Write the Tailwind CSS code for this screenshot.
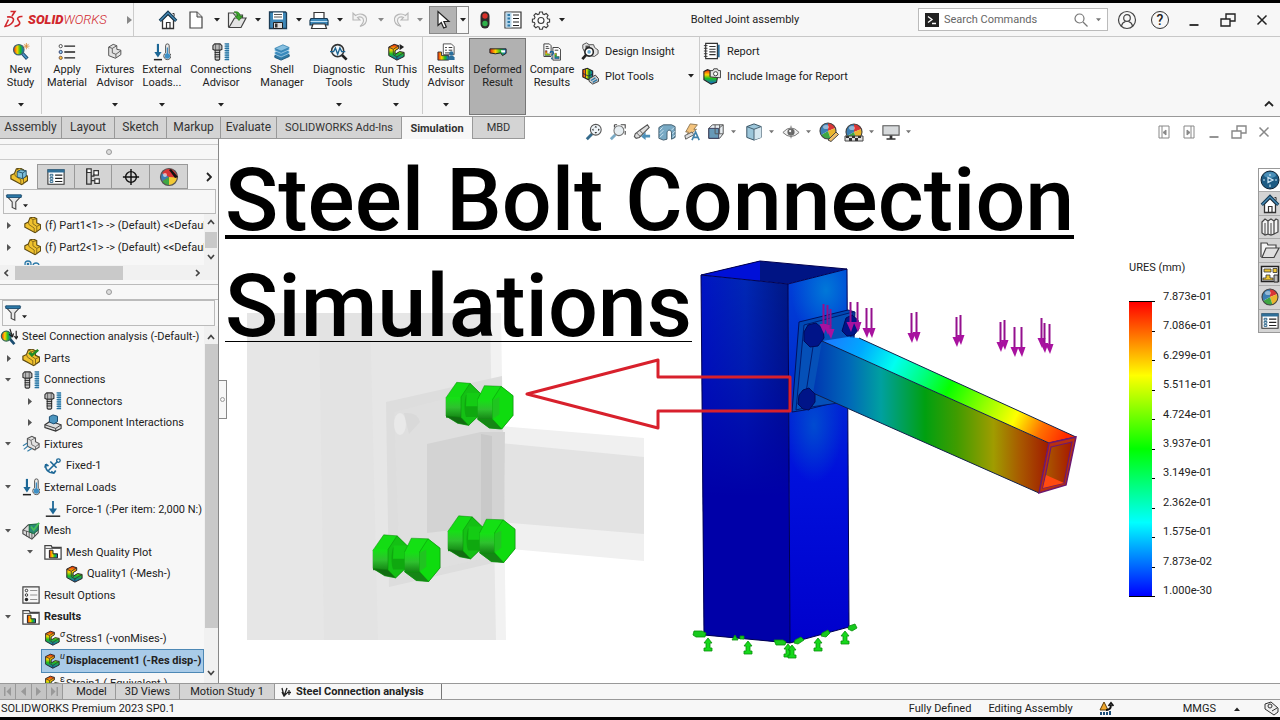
<!DOCTYPE html>
<html lang="en">
<head>
<meta charset="utf-8">
<meta name="viewport" content="width=device-width, initial-scale=1">
<title>Bolted Joint assembly - SOLIDWORKS</title>
<script src="https://cdn.jsdelivr.net/npm/@tailwindcss/browser@4"></script>
</head>
<body class="bg-black">
<!-- Icon library -->
<svg class="absolute h-0 w-0" aria-hidden="true">
  <defs>
    <linearGradient id="rainbow" x1="0" y1="0" x2="0" y2="1"><stop offset="0" stop-color="#e8200c"/><stop offset=".35" stop-color="#ffd400"/><stop offset=".6" stop-color="#20c020"/><stop offset="1" stop-color="#1060e0"/></linearGradient>
    <linearGradient id="rainbowH" x1="0" y1="0" x2="1" y2="0"><stop offset="0" stop-color="#e8200c"/><stop offset=".35" stop-color="#ffd400"/><stop offset=".65" stop-color="#20c020"/><stop offset="1" stop-color="#1060e0"/></linearGradient>
    <linearGradient id="gL" gradientUnits="userSpaceOnUse" x1="701" y1="0" x2="790" y2="0"><stop offset="0" stop-color="#0014c4"/><stop offset=".5" stop-color="#0028b4"/><stop offset="1" stop-color="#001880"/></linearGradient>
  </defs>
  <symbol id="dd" viewBox="0 0 6 4"><path d="M0 0h6L3 3.5z" fill="currentColor"/></symbol>
  <symbol id="home" viewBox="0 0 20 20"><path d="M4.500 10v8.500h11V10L10 4.500z" fill="#fff" stroke="#333" stroke-width="1.300"/><path d="M8.500 18.500v-6h3.500v6" fill="none" stroke="#333" stroke-width="1.200"/><path d="M1.800 10.800 10 2.600l8.200 8.200" fill="none" stroke="#123a55" stroke-width="3.200"/><path d="M2.300 10.500 10 2.900l7.700 7.600" fill="none" stroke="#4a8db8" stroke-width="1.200"/><path d="M14.500 3.500h1.600v3" stroke="#333" fill="none"/></symbol>
  <symbol id="doc" viewBox="0 0 20 20"><path d="M4 2h7l5 5v11H4z" fill="#fff" stroke="#444" stroke-width="1.200"/><path d="M11 2v5h5" fill="#ddd" stroke="#444"/></symbol>
  <symbol id="open" viewBox="0 0 20 20"><path d="M1.500 17V3h5l1 2h8v3" fill="#f1f1f1" stroke="#444" stroke-width="1.200"/><path d="M2 17.500 7.500 8H19l-5 9.500z" fill="#e4e4e4" stroke="#444" stroke-width="1.200"/><path d="M7 2c4-1 6 1 6 4h2.500L12 10.500 8 6h2.500C10.500 4 9 3 7 2z" fill="#3ba52a" stroke="#1c6e13" stroke-width=".7"/></symbol>
  <symbol id="save" viewBox="0 0 20 20"><path d="M1.500 2h16l1 1v15.500h-17z" fill="#3e88b8" stroke="#1c3c55" stroke-width="1.300"/><path d="M5 2.500h10v7H5z" fill="#fff"/><path d="M6 4.500h8M6 7h8" stroke="#555"/><path d="M5.500 12.500h9v6h-9z" fill="#ddd" stroke="#222"/><path d="M7 13.500h2.500v4H7z" fill="#333"/></symbol>
  <symbol id="print" viewBox="0 0 20 20"><path d="M5 9V2.500h10V9" fill="#fff" stroke="#333" stroke-width="1.200"/><path d="M2 8.500h16l1 2v4.500H1v-4.500z" fill="#3e88b8" stroke="#173a54" stroke-width="1.200"/><path d="M1.500 11.500h17" stroke="#bfe0f4"/><path d="m4 14-1.500 4.500h15L16 14z" fill="#fff" stroke="#333" stroke-width="1.200"/></symbol>
  <symbol id="undo" viewBox="0 0 20 20"><path d="M3 3v7h7L7.500 7.500c3-1.500 6 0 6 3 0 2-1.500 4-3.500 6 5-1.500 7-4.500 6.500-8C15.800 4.500 10 2.500 5.500 5.500z" fill="#f2f2f2" stroke="#b7b7b7" stroke-width="1.100"/></symbol>
  <symbol id="cursor" viewBox="0 0 20 20"><path d="M5 1.500v14l3.300-3 2.400 5.500 2.600-1.100-2.400-5.400H16z" fill="#fff" stroke="#222" stroke-width="1.200"/></symbol>
  <symbol id="traffic" viewBox="0 0 20 20"><rect x="5.500" y="1.500" width="9" height="17" rx="4.500" fill="#2c2c2c"/><circle cx="10" cy="6" r="2.700" fill="#d8322a"/><circle cx="10" cy="13.500" r="2.700" fill="#2fb04a"/></symbol>
  <symbol id="list" viewBox="0 0 20 20"><path d="M2 2h16v16H2z" fill="#fff" stroke="#333" stroke-width="1.200"/><path d="M2.500 2.500h6v15h-6z" fill="#b7d6ea"/><path d="M4.500 4h2.500v2H4.500zM4.500 7.500h2.500v2H4.500zM4.500 11h2.500v2H4.500zM4.500 14.500h2.500v2H4.500z" fill="#2c79a8"/><path d="M10 5h6M10 8.500h6M10 12h6M10 15.500h6" stroke="#222" stroke-width="1.200"/></symbol>
  <symbol id="panel" viewBox="0 0 20 20"><path d="M1 2h18v16H1z" fill="#fff" stroke="#333" stroke-width="1.200"/><path d="M.5 1.500h19v3.500H.5z" fill="#2f6f98"/><path d="M3.500 7h3v2h-3zM3.500 10.500h3v2h-3zM3.500 14h3v2h-3z" fill="none" stroke="#1d5a82"/><path d="M9 8h8M9 11.500h8M9 15h8" stroke="#222" stroke-width="1.300"/></symbol>
  <symbol id="gear" viewBox="0 0 20 20"><path d="m8.600 2 2.800 0 .5 2 1.400.6 1.900-1.100 1.900 1.900-1.100 1.900.6 1.400 2 .5v2.800l-2 .5-.6 1.400 1.100 1.900-1.900 1.900-1.900-1.100-1.400.6-.5 2H8.600l-.5-2-1.400-.6-1.900 1.100-1.900-1.900L4 13.900l-.6-1.400-2-.5V9.200l2-.5L4 7.300 2.900 5.400l1.900-1.900 1.900 1.100L8.100 4z" fill="#fafafa" stroke="#3c3c3c" stroke-width="1.100"/><circle cx="10" cy="10.500" r="3" fill="#fff" stroke="#3c3c3c" stroke-width="1.100"/></symbol>
  <symbol id="newstudy" viewBox="0 0 20 20"><path d="m11 11 6 6.500" stroke="#1a4c70" stroke-width="4"/><path d="m11.500 11.500 5 5.500" stroke="#4e97c8" stroke-width="1.800"/><circle cx="7.500" cy="7.500" r="5.800" fill="url(#rainbowH)" stroke="#3e6474" stroke-width="1.400"/><path d="M16 0v7M12.500 3.500h7M13.500 1l5 5M18.500 1l-5 5" stroke="#d98b37" stroke-width=".9"/></symbol>
  <symbol id="apply" viewBox="0 0 20 20"><path d="M7 3.500h12M7 10h12M7 16.500h12" stroke="#222" stroke-width="1.600"/><circle cx="3" cy="3.500" r="1.800" fill="#fff" stroke="#444"/><circle cx="3" cy="10" r="1.800" fill="#9bd1f0" stroke="#236"/><circle cx="3" cy="16.500" r="1.800" fill="#ffc43a" stroke="#754"/></symbol>
  <symbol id="fixture" viewBox="0 0 20 20"><path d="m3 4.500 5-3 4 1.500v4l4.500 1v5l-6 4-7.500-3z" fill="#e3e3e3" stroke="#555" stroke-width="1.100"/><path d="m3 4.500 4 1.500v5l4 1.500v4M7 6l5-3M11 12.500l5.500-4" fill="none" stroke="#555"/></symbol>
  <symbol id="loads" viewBox="0 0 20 20"><path d="M5.500 1v12" stroke="#1c6796" stroke-width="2.400"/><path d="M1.500 10h8l-4 6z" fill="#1c6796"/><path d="M1 18.500h9" stroke="#222" stroke-width="1.700"/><path d="M14 3a2 2 0 0 1 4 0v8a4 4 0 1 1-4 0z" fill="#eee" stroke="#444"/><circle cx="16" cy="14.500" r="3" fill="#3e8fc4"/><path d="M16 5v8" stroke="#3e8fc4" stroke-width="1.500"/></symbol>
  <symbol id="bolt" viewBox="0 0 20 20"><path d="m1 3 2-2h6l2 2v4l-2 1H3L1 7z" fill="#bbb" stroke="#333" stroke-width="1.200"/><path d="M4 1v7M8 1v7" stroke="#444" stroke-width=".8"/><path d="M3.500 8h5v10l-1 1h-3l-1-1z" fill="#ccc" stroke="#333" stroke-width="1.200"/><path d="M3 10.500h6M3 13h6M3 15.500h6" stroke="#222"/><path d="M15 1h4v18h-4z" fill="#8dc1de"/><path d="M19 1h-5M19 3.500h-5M19 6h-5M19 8.500h-5M19 11h-5M19 13.500h-5M19 16h-5M19 18.500h-5" stroke="#2b74a0" stroke-width="1.200"/></symbol>
  <symbol id="shell" viewBox="0 0 20 20"><path d="m2 14 9-4 7 3v2l-9 4-7-3z" fill="#2e79a5" stroke="#1b557a"/><path d="m2 10 9-4 7 3v2.500l-9 4-7-3z" fill="#3a8abd" stroke="#c8e4f4" stroke-width=".7"/><path d="m2 6 9-4 7 3v2.500l-9 4-7-3z" fill="#3a8abd" stroke="#c8e4f4" stroke-width=".7"/><path d="m2 6 9-4 7 3-9 4z" fill="#86bfe0" stroke="#2e79a5" stroke-width=".7"/></symbol>
  <symbol id="diag" viewBox="0 0 20 20"><path d="m13 13 5.500 5.500" stroke="#222" stroke-width="3"/><circle cx="8.500" cy="8.500" r="6.700" fill="#f2f8fc" stroke="#333" stroke-width="1.700"/><path d="M0 9.500h4l2-4 2.500 7L11 5.500l2 4h4" fill="none" stroke="#1d6491" stroke-width="1.500"/></symbol>
  <symbol id="part" viewBox="0 0 20 20"><path d="m2 4.500 6-3 5 1.500v3l-4 2.500v4l5-3 5 1v4.500L11 19l-9-5z" fill="url(#rainbow)" stroke="#222" stroke-width="1.100"/><path d="m2 4.500 5 2.500v6l4 2.500V19M7 7l6-4M11 15.500l8-5" fill="none" stroke="#333" stroke-width=".9"/></symbol>
  <symbol id="run" viewBox="0 0 20 20"><use href="#part"/><path d="m14 1 5 3.500L14 8z" fill="#222"/></symbol>
  <symbol id="results" viewBox="0 0 20 20"><path d="M7 1h9l3 3v9H7z" fill="#fff" stroke="#444"/><path d="M9 5h2M9 8h2M13 5h4M13 8h4M9 11h8" stroke="#222"/><path d="M1 10h4v4h8v5H1z" fill="url(#rainbowH)" stroke="#333"/><circle cx="16" cy="11.500" r="2.300" fill="#2b6f9c"/><path d="M12.500 19v-3l2-2h3l2 2v3z" fill="#2b6f9c"/></symbol>
  <symbol id="deform" viewBox="0 0 20 20"><path d="M1 6.500h18v5l-4 2.500-2-3-6 1-6-1z" fill="url(#rainbowH)" stroke="#222" stroke-width="1.100"/><path d="M13 8h5v2.500h-4z" fill="#fff"/></symbol>
  <symbol id="compare" viewBox="0 0 20 20"><path d="M1 1h6l2 2v12H1z" fill="#fff" stroke="#333"/><path d="M11 5h6l2.500 2v12H11z" fill="#fff" stroke="#333"/><path d="M3 4h3M3 6h4M13 8h4" stroke="#333"/><path d="M2.500 8.500h2V12h3v2h-5zM13 11.500h2V15h3v2.500h-5z" fill="url(#rainbow)" stroke="#333" stroke-width=".5"/><path d="M8 11c0-2 3.500-2 3.500 0 0 1.500-1.700 1.500-1.700 3M9.800 16v2" fill="none" stroke="#1a639a" stroke-width="1.600"/></symbol>
  <symbol id="insight" viewBox="0 0 20 20"><path d="m2 3 4-2 3 2h5l1 3 4 3v4l-4 3-7-1-4-4-2-4z" fill="#e4e4e4" stroke="#444"/><path d="M5 4h5v3H5z" fill="#555"/><circle cx="9" cy="11" r="4.700" fill="#fff" stroke="#222" stroke-width="1.700"/><path d="M5.500 14.500 1.500 19" stroke="#222" stroke-width="3"/><circle cx="9" cy="11" r="2" fill="#68a7cc"/></symbol>
  <symbol id="plot" viewBox="0 0 20 20"><path d="m2 3 5-1.500 6 3v8L8 14 2 11z" fill="url(#rainbowH)" stroke="#222" stroke-width="1.200"/><path d="M5 2v10M9 4v9M2 7l6 3 5-2" stroke="#224" stroke-width=".9" fill="none"/><path d="m9 13 7-4 3.500 4v3L13 19l-4-3z" fill="#ccc" stroke="#333"/><path d="m11 15 5-3M13 17l5-3" stroke="#2c79a8" stroke-width="1.500"/></symbol>
  <symbol id="report" viewBox="0 0 20 20"><path d="M3 1.500h13v17H3z" fill="#fff" stroke="#333" stroke-width="1.300"/><path d="M1 4h4M1 7h4M1 10h4M1 13h4M1 16h4" stroke="#333"/><path d="M7 5h7M7 8h7M7 11h7M7 14h7" stroke="#333" stroke-width="1.200"/><path d="M17.500 3v14" stroke="#2b6f9c" stroke-width="2"/></symbol>
  <symbol id="include" viewBox="0 0 20 20"><path d="m1 5 4-2 3 1v6l8 2-1 5-6 2-8-5z" fill="url(#rainbow)" stroke="#222" stroke-width="1.200"/><path d="M8 4h3l1-2h4l1 2h2.500v8L8 11z" fill="#e4e4e4" stroke="#333"/><circle cx="14" cy="7.500" r="2.300" fill="#fff" stroke="#333"/></symbol>
  <symbol id="zoomfit" viewBox="0 0 20 20"><path d="M8 12 2 18" stroke="#356b8c" stroke-width="3.200"/><circle cx="12" cy="7.500" r="6" fill="#eef4f8" stroke="#555" stroke-width="1.200"/><path d="m12 3 1.500 2h-3zM12 12l1.500-2h-3zM7.500 7.500l2-1.500v3zM16.500 7.500l-2-1.500v3z" fill="#333"/></symbol>
  <symbol id="zoomarea" viewBox="0 0 20 20"><path d="M6 2h3M13 2h5v4M18 9v4M6 2v3" stroke="#444" stroke-width="1.200" fill="none"/><path d="m7 13-5 5" stroke="#7aaac5" stroke-width="3.200"/><circle cx="11" cy="8.500" r="5.500" fill="#e6edf1" stroke="#777" stroke-width="1.200"/></symbol>
  <symbol id="prevview" viewBox="0 0 20 20"><path d="m16 2 2 3-7 7-4 4-3.500 1L1.500 15l1-3 5-4z" fill="#ddd" stroke="#555" stroke-width="1.200"/><path d="m7.500 8 3.500 4M4 11l4 4" stroke="#555"/><path d="M19 13h-5v-3l-5 5 5 4v-3h5z" fill="#4b8fb9"/></symbol>
  <symbol id="section" viewBox="0 0 20 20"><path d="m1 5 5-3h9l4 2v12l-4 2v-7c0-4-5-4-5 0v7l-4 1-5-2z" fill="#78a9c4" stroke="#3b5666"/><path d="m2 8 3-3M2 12l4-4M2 16l4-4M15 8l3-3M16 12l3-3M16 16l3-3" stroke="#d7ebf5"/></symbol>
  <symbol id="dynamic" viewBox="0 0 20 20"><path d="m8 1 8 1-4 5h3L3 17l3-7H3z" fill="#f4c37c" stroke="#8c734c"/><path d="m2 14 8-4 2 3-9 5z" fill="#ddd" stroke="#555"/><path d="m10 19 4-9 4 9M12 16h4.500" fill="none" stroke="#3f81aa" stroke-width="1.800"/></symbol>
  <symbol id="orient" viewBox="0 0 20 20"><path d="m2 6 4-4h12v10l-4 5H2z" fill="#e8eef2" stroke="#444"/><path d="M2 6h11v11H2z" fill="#6799b7" stroke="#335"/><path d="m13 6 5-4M9 2v10h9M14 2v10" stroke="#555" fill="none"/></symbol>
  <symbol id="cube" viewBox="0 0 20 20"><path d="m2 4 8-3 8 3v12l-8 3-8-3z" fill="#9cc6da" stroke="#3b5666" stroke-width="1.100"/><path d="m10 7 8-3v12l-8 3z" fill="#d4e6ef"/><path d="m2 4 8 3 8-3M10 7v12" fill="none" stroke="#3b5666"/></symbol>
  <symbol id="eye" viewBox="0 0 20 20"><path d="M1 10.500q9-10 18 0-9 9-18 0z" fill="#eee" stroke="#777" stroke-width="1.100"/><circle cx="10" cy="10" r="4" fill="#666"/><path d="M10 3v14" stroke="#777"/><circle cx="9" cy="9" r="1.200" fill="#fff"/></symbol>
  <symbol id="ball" viewBox="0 0 20 20"><circle cx="10" cy="10" r="8" fill="#fff"/><path d="M10 10V2a8 8 0 0 1 7.500 5z" fill="#d93636"/><path d="m10 10 7.500-3a8 8 0 0 1-5 10.700z" fill="#e9b52e"/><path d="m10 10 2.500 7.700A8 8 0 0 1 3 14z" fill="#3fa743"/><path d="m10 10-7 4a8 8 0 0 1 7-12z" fill="#3c7fb4"/><circle cx="10" cy="10" r="8" fill="none" stroke="#444" stroke-width="1.100"/><ellipse cx="8" cy="6" rx="3" ry="2" fill="#fff" opacity=".45"/></symbol>
  <symbol id="ballred" viewBox="0 0 20 20"><circle cx="10" cy="10" r="8.500" fill="#d93636"/><path d="M10 10 3 14.500a8.500 8.500 0 0 1-.5-8.500z" fill="#3c7fb4"/><path d="m10 10-7 4.500a8.500 8.500 0 0 0 7 4z" fill="#3fa743"/><path d="M10 10v8.500a8.500 8.500 0 0 0 8.500-8z" fill="#f2c935"/><circle cx="10" cy="10" r="8.500" fill="none" stroke="#555" stroke-width="1.200"/><path d="m10 3 2-1 7 8-3 1z" fill="#111"/><circle cx="6" cy="8" r="2" fill="#fff" opacity=".6"/></symbol>
  <symbol id="appear" viewBox="0 0 20 20"><use href="#ball" x="-1" y="-1"/><path d="m9 18 8-8 2.500 2.500-7.500 7z" fill="#f0c06a" stroke="#444"/></symbol>
  <symbol id="scene" viewBox="0 0 20 20"><use href="#ball"/><path d="M1 14h18v5H1z" fill="#ddd" stroke="#444"/><path d="M2 14h3v2H2zM8 14h3v2H8zM14 14h3v2h-3zM5 16h3v3H5zM11 16h3v3h-3z" fill="#333"/></symbol>
  <symbol id="monitor" viewBox="0 0 20 20"><path d="M1 3h18v10.500H1z" fill="#d7dadc" stroke="#555" stroke-width="1.200"/><path d="M8.500 14h3v3h-3zM5 17h10v1.500H5z" fill="#333"/></symbol>
  <symbol id="restore" viewBox="0 0 20 20"><path d="M3 9h9v7H3z" fill="none" stroke="currentColor" stroke-width="1.400"/><path d="M8 9V4h9v7h-5" fill="none" stroke="currentColor" stroke-width="1.400"/></symbol>
  <symbol id="close" viewBox="0 0 20 20"><path d="m5.500 5.500 9 9m0-9-9 9" stroke="currentColor" stroke-width="1.500"/></symbol>
  <symbol id="min" viewBox="0 0 20 20"><path d="M5.500 15h9" stroke="currentColor" stroke-width="1.800"/></symbol>
  <symbol id="yellow" viewBox="0 0 20 20"><path d="m1 8 4-2 2-5 4-1 4 2v5l4.500 2v5L13 18.500 1 12z" fill="#f0c22e" stroke="#5b4710" stroke-width="1.300"/><path d="m7 1 3.500 2v5L15 11v7M10.500 3 15 2M15 11l4.500-2M5 6l1 3 6 4v5" fill="none" stroke="#7d6218"/></symbol>
  <symbol id="asm" viewBox="0 0 20 20"><use href="#yellow"/><path d="m8 4 4-2 6 1v6l-4 3-6-2z" fill="#7ec0dc" stroke="#234e66"/><path d="m8 4 6 1.500V12M14 5.500 18 3" stroke="#234e66" fill="none"/></symbol>
  <symbol id="tree" viewBox="0 0 20 20"><path d="M3 1h5v4H3zM11 3h5v5h-5zM12 12h5v5h-5z" fill="#fff" stroke="#333" stroke-width="1.300"/><path d="M3 1v17h5V5M8 9h3V7M8 14h4" stroke="#333" fill="none" stroke-width="1.400"/></symbol>
  <symbol id="target" viewBox="0 0 20 20"><circle cx="10" cy="10" r="6" fill="none" stroke="#111" stroke-width="1.600"/><path d="M10 1v18M1 10h18" stroke="#111" stroke-width="1.600"/></symbol>
  <symbol id="funnel" viewBox="0 0 20 20"><path d="M2 3.500h16L12 10v8l-4-2v-6z" fill="#e8e8e8" stroke="#444" stroke-width="1.200"/><path d="M2 2h16v3H2z" fill="#2c79a8" stroke="#1a4c70"/></symbol>
  <symbol id="study" viewBox="0 0 20 20"><path d="m10 11 6 7" stroke="#1a4c70" stroke-width="3"/><circle cx="7" cy="9" r="5.500" fill="url(#rainbowH)" stroke="#365" stroke-width="1.300"/><path d="m11 1 3 9M14 10l-4-3M14 10l1-4M18 3v8M16 9l2 3 2-3" stroke="#222" stroke-width="1.300" fill="none"/></symbol>
  <symbol id="partcheck" viewBox="0 0 20 20"><use href="#yellow"/><path d="m8 4 3 3 7-6" fill="none" stroke="#218c26" stroke-width="2.800"/></symbol>
  <symbol id="interact" viewBox="0 0 20 20"><path d="m1 12 6-4 12 4v4l-6 3L1 15z" fill="#ddd" stroke="#333" stroke-width="1.200"/><path d="m1 12 12 4 6-4M13 16v3" fill="none" stroke="#333"/><path d="m6 3 4-2 5 1.500v6L11 11l-5-2z" fill="#4b95bf" stroke="#1a4c70" stroke-width="1.100"/></symbol>
  <symbol id="fixtures" viewBox="0 0 20 20"><path d="m6 4 5-2.500 4 2v4l4 2v4l-5 3-8-4z" fill="#e2e2e2" stroke="#555" stroke-width="1.200"/><path d="m10 6 1 5 4 2v4M6 4l4 2 5-3M15 13l4-3" stroke="#666" fill="none"/><path d="m1 12 5-3M2 16l5-4M6 18l5-3" stroke="#367fa9" stroke-width="1.300"/></symbol>
  <symbol id="anchor" viewBox="0 0 20 20"><path d="M15 5 5 15M7 5l7 7M2 8c-1 6 3 10 9 10M2 8l-1 4M2 8l3 2M11 18l-3-2M11 18l2-3" fill="none" stroke="#1c6796" stroke-width="1.800"/><circle cx="16" cy="4" r="2" fill="none" stroke="#1c6796" stroke-width="1.500"/></symbol>
  <symbol id="force" viewBox="0 0 20 20"><path d="M10 1v11" stroke="#1c6796" stroke-width="2"/><path d="M5.500 9.500h9L10 16z" fill="#1c6796"/><path d="M2 18h16" stroke="#222" stroke-width="1.600"/></symbol>
  <symbol id="mesh" viewBox="0 0 20 20"><path d="m1 9 6-6 11 1v8l-7 7-10-6z" fill="#dadada" stroke="#444" stroke-width="1.200"/><path d="M1 9l10 3 7-8M11 12v7M5 10v6M8 11v7M14 9v7" stroke="#555" fill="none"/><path d="m8 3 10-1v7l-5 4-5-2z" fill="#2b8676" stroke="#163"/><path d="m10 5 3 4 6-8" fill="none" stroke="#45c057" stroke-width="2"/></symbol>
  <symbol id="folder" viewBox="0 0 20 20"><path d="M1 18V3h7l1 2h10v13z" fill="#fff" stroke="#444" stroke-width="1.400"/><path d="M1.500 6h17" stroke="#444"/><path d="M6 8h4v4h5v4.500H6z" fill="url(#rainbowH)" stroke="#222" stroke-width="1.100"/></symbol>
  <symbol id="options" viewBox="0 0 20 20"><path d="M1 1h18v18H1z" fill="#f6f6f6" stroke="#444" stroke-width="1.300"/><path d="M9 5h8M9 10h8M9 15h8" stroke="#888"/><circle cx="5" cy="5" r="1.400" fill="#fff" stroke="#222"/><circle cx="5" cy="10" r="1.400" fill="#fff" stroke="#222"/><circle cx="5" cy="15" r="1.900" fill="#222"/></symbol>
  <symbol id="books" viewBox="0 0 20 20"><path d="m2 5 3-3 3 2v13l-3 1-3-2zM8 4l3-2 3 2v13l-3 1-3-1zM14 4l2-2 2 1v12l-4 2" fill="#f3f3f3" stroke="#444" stroke-width="1.200"/><path d="M5 6v12M11 6v12" stroke="#444"/></symbol>
  <symbol id="folder2" viewBox="0 0 20 20"><path d="M1 17V3h6l1 2h8v3" fill="#f4f4f4" stroke="#444" stroke-width="1.200"/><path d="M2 17.500 6 8h13l-5 9.500z" fill="#e0e0e0" stroke="#444" stroke-width="1.200"/></symbol>
  <symbol id="palette" viewBox="0 0 20 20"><path d="M1.500 2.500h17v15h-17z" fill="#fff" stroke="#222" stroke-width="1.500"/><path d="M4 5h7v3H4zM13 4.500h4v4h-4zM6 11h4v3h3v2H3v-2h3z" fill="#eec531" stroke="#333" stroke-width=".8"/><path d="M14 11h4v7h-4z" fill="#bbb" stroke="#333"/></symbol>
  <symbol id="globe" viewBox="0 0 20 20"><circle cx="10" cy="10" r="9" fill="#1e5c84" stroke="#123"/><ellipse cx="10" cy="5" rx="6" ry="3" fill="#4a8fb8"/><path d="m8 7.500 5 2.500-5 2.500zM3 10h2M15 10h2M10 14.500v2.500M10 4v2" stroke="#cfe6f4" fill="none" stroke-width="1.200"/></symbol>
</svg>

<div class="flex h-screen w-full flex-col overflow-hidden border-y-3 border-black bg-white font-['Roboto','Noto_Sans',sans-serif] text-[11px] leading-[13px] text-[#222]">

  <!-- Title bar -->
  <header class="flex h-[34px] shrink-0 items-center border-b border-[#c8c8c8] bg-[#f7f7f7]">
    <div class="flex h-full w-[134px] shrink-0 items-center border-r border-[#ccc] pl-1">
      <svg class="h-5 w-5" viewBox="0 0 20 20" fill="none" stroke="#d1272c" stroke-width="1.600"><path d="M6.500 1.500h4.500L8 6M3 7c7-1 8 3 4.500 6.500C5.500 15.500 3 16.500 1 16.500L4.500 9.500M18.500 6.500c-4-.5-6 2-4 4s2 5-4 6"/></svg>
      <div class="ml-1 text-[13px] leading-5 font-black text-[#d1272c] italic">SOLID<span class="font-light">WORKS</span></div>
      <svg class="ml-5 h-2 w-[5px]" viewBox="0 0 5 8"><path d="M0 0v8l5-4z" fill="#888"/></svg>
    </div>
    <nav class="flex shrink-0 items-center" aria-label="Quick access">
      <button class="mr-2 ml-6 size-5" aria-label="Home"><svg class="size-5"><use href="#home"/></svg></button>
      <button class="size-5" aria-label="New"><svg class="size-5"><use href="#doc"/></svg></button><button class="flex w-[21px] justify-center" aria-label="New options"><svg class="h-1 w-[6px]"><use href="#dd"/></svg></button>
      <button class="size-5" aria-label="Open"><svg class="size-5"><use href="#open"/></svg></button><button class="flex w-[21px] justify-center" aria-label="Open options"><svg class="h-1 w-[6px]"><use href="#dd"/></svg></button>
      <button class="size-5" aria-label="Save"><svg class="size-5"><use href="#save"/></svg></button><button class="flex w-[21px] justify-center" aria-label="Save options"><svg class="h-1 w-[6px]"><use href="#dd"/></svg></button>
      <button class="size-5" aria-label="Print"><svg class="size-5"><use href="#print"/></svg></button><button class="flex w-[21px] justify-center" aria-label="Print options"><svg class="h-1 w-[6px]"><use href="#dd"/></svg></button>
      <button class="size-5" aria-label="Undo"><svg class="size-5"><use href="#undo"/></svg></button><button class="flex w-[21px] justify-center text-[#888]" aria-label="Undo options"><svg class="h-1 w-[6px]"><use href="#dd"/></svg></button>
      <button class="size-5 -scale-x-100" aria-label="Redo"><svg class="size-5"><use href="#undo"/></svg></button><button class="flex w-[18px] justify-center text-[#888]" aria-label="Redo options"><svg class="h-1 w-[6px]"><use href="#dd"/></svg></button>
      <button class="flex h-7 w-7 items-center justify-center border border-[#8a8a8a] bg-[#b3b3b3]" aria-label="Select"><svg class="size-5"><use href="#cursor"/></svg></button><button class="flex h-7 w-3 items-center justify-center border border-l-0 border-[#8a8a8a]" aria-label="Select options"><svg class="h-1 w-[6px]"><use href="#dd"/></svg></button>
      <button class="ml-[6px] size-5" aria-label="Rebuild"><svg class="size-5"><use href="#traffic"/></svg></button>
      <button class="ml-2 size-5" aria-label="File properties"><svg class="size-5"><use href="#list"/></svg></button>
      <button class="ml-2 size-5" aria-label="Options"><svg class="size-5"><use href="#gear"/></svg></button>
      <button class="flex w-[21px] justify-center" aria-label="More options"><svg class="h-1 w-[6px]"><use href="#dd"/></svg></button>
    </nav>
    <div class="flex-1 text-center">Bolted Joint assembly</div>
    <label class="flex h-[23px] w-[190px] shrink-0 items-center border border-[#bbb] bg-white px-[6px]">
      <svg class="size-[14px] shrink-0" viewBox="0 0 14 14"><path d="M0 0h14v14H0z" fill="#222"/><path d="m3 3.500 4 3-4 3M7 10.500h4" stroke="#fff" fill="none" stroke-width="1.300"/></svg>
      <input class="ml-[5px] w-0 min-w-0 flex-1 outline-none placeholder:text-[#666]" type="search" placeholder="Search Commands" aria-label="Search Commands">
      <svg class="size-[14px] shrink-0" viewBox="0 0 14 14" fill="none" stroke="#777" stroke-width="1.200"><circle cx="5.500" cy="5.500" r="4.500"/><path d="m9 9 4.500 4.500"/></svg>
      <svg class="ml-2 h-1 w-[5px] shrink-0 text-[#777]"><use href="#dd"/></svg>
    </label>
    <div class="flex shrink-0 items-center pr-2 text-[#222]">
      <button class="ml-[9px] size-5" aria-label="Account"><svg class="size-5" viewBox="0 0 20 20" fill="none" stroke="#444" stroke-width="1.200"><circle cx="10" cy="10" r="8.500"/><circle cx="10" cy="8" r="3.300"/><path d="M4.500 16c.5-3 2.500-4 4-4.500M15.500 16c-.5-3-2.500-4-4-4.500"/></svg></button>
      <button class="ml-[14px] flex size-[18px] items-center justify-center rounded-full border border-[#333] text-[14px] leading-4 font-medium" aria-label="Help">?</button>
      <button class="ml-[15px] size-5" aria-label="Minimize"><svg class="size-5"><use href="#min"/></svg></button>
      <button class="ml-[14px] size-5" aria-label="Restore"><svg class="size-5"><use href="#restore"/></svg></button>
      <button class="ml-[14px] size-5" aria-label="Close"><svg class="size-5"><use href="#close"/></svg></button>
    </div>
  </header>

  <!-- Ribbon -->
  <section class="flex h-[80px] shrink-0 items-start border-b border-[#999] bg-[#f7f7f7]" aria-label="Simulation commands">
    <button class="flex h-[77px] w-[42px] shrink-0 flex-col items-center border-r border-[#ccc] pt-[6px]"><svg class="mb-[2px] h-[18px] w-[18px]"><use href="#newstudy"/></svg>New<br>Study<svg class="mt-[14px] h-1 w-[6px]"><use href="#dd"/></svg></button>
    <button class="flex h-[77px] w-[50px] shrink-0 flex-col items-center pt-[6px]"><svg class="mb-[2px] h-[18px] w-[18px]"><use href="#apply"/></svg>Apply<br>Material</button>
    <button class="flex h-[77px] w-[46px] shrink-0 flex-col items-center pt-[6px]"><svg class="mb-[2px] h-[18px] w-[18px]"><use href="#fixture"/></svg>Fixtures<br>Advisor<svg class="mt-[14px] h-1 w-[6px]"><use href="#dd"/></svg></button>
    <button class="flex h-[77px] w-[48px] shrink-0 flex-col items-center pt-[6px]"><svg class="mb-[2px] h-[18px] w-[18px]"><use href="#loads"/></svg>External<br>Loads...<svg class="mt-[14px] h-1 w-[6px]"><use href="#dd"/></svg></button>
    <button class="flex h-[77px] w-[70px] shrink-0 flex-col items-center pt-[6px]"><svg class="mb-[2px] h-[18px] w-[18px]"><use href="#bolt"/></svg>Connections<br>Advisor<svg class="mt-[14px] h-1 w-[6px]"><use href="#dd"/></svg></button>
    <button class="flex h-[77px] w-[52px] shrink-0 flex-col items-center pt-[6px]"><svg class="mb-[2px] h-[18px] w-[18px]"><use href="#shell"/></svg>Shell<br>Manager</button>
    <button class="flex h-[77px] w-[62px] shrink-0 flex-col items-center pt-[6px]"><svg class="mb-[2px] h-[18px] w-[18px]"><use href="#diag"/></svg>Diagnostic<br>Tools<svg class="mt-[14px] h-1 w-[6px]"><use href="#dd"/></svg></button>
    <button class="flex h-[77px] w-[53px] shrink-0 flex-col items-center border-r border-[#ccc] pt-[6px]"><svg class="mb-[2px] h-[18px] w-[18px]"><use href="#run"/></svg>Run This<br>Study<svg class="mt-[14px] h-1 w-[6px]"><use href="#dd"/></svg></button>
    <button class="flex h-[77px] w-[46px] shrink-0 flex-col items-center pt-[6px]"><svg class="mb-[2px] h-[18px] w-[18px]"><use href="#results"/></svg>Results<br>Advisor<svg class="mt-[14px] h-1 w-[6px]"><use href="#dd"/></svg></button>
    <button class="mt-px flex h-[77px] w-[57px] shrink-0 flex-col items-center border border-[#777] bg-[#b1b1b1] pt-[4px]" aria-pressed="true"><svg class="mb-[2px] h-[18px] w-[18px]"><use href="#deform"/></svg>Deformed<br>Result</button>
    <button class="flex h-[77px] w-[52px] shrink-0 flex-col items-center pt-[6px]"><svg class="mb-[2px] h-[18px] w-[18px]"><use href="#compare"/></svg>Compare<br>Results</button>
    <div class="flex h-[77px] w-[122px] shrink-0 flex-col gap-[7px] border-r border-[#ccc] pt-[5px] pl-[3px]">
      <button class="flex items-center"><svg class="mr-[6px] h-[18px] w-[18px]"><use href="#insight"/></svg>Design Insight</button>
      <button class="flex items-center pr-[5px]"><svg class="mr-[6px] h-[18px] w-[18px]"><use href="#plot"/></svg>Plot Tools<svg class="ml-auto h-1 w-[6px]"><use href="#dd"/></svg></button>
    </div>
    <div class="flex h-[77px] flex-col gap-[7px] pt-[5px] pl-[3px]">
      <button class="flex items-center"><svg class="mr-[6px] h-[18px] w-[18px]"><use href="#report"/></svg>Report</button>
      <button class="flex items-center"><svg class="mr-[6px] h-[18px] w-[18px]"><use href="#include"/></svg>Include Image for Report</button>
    </div>
    <button class="mt-[62px] mr-[6px] ml-auto" aria-label="Collapse ribbon"><svg class="h-[10px] w-[10px]" viewBox="0 0 10 10"><path d="m1 7 4-4 4 4" fill="none" stroke="#222" stroke-width="1.800"/></svg></button>
  </section>

  <!-- Command tabs and view toolbar -->
  <div class="flex h-[22px] shrink-0">
    <div class="flex shrink-0 text-[12px] text-[#333]" role="tablist">
      <button role="tab" class="w-[62px] border-r border-b border-[#999] bg-[#d4d4d4]">Assembly</button>
      <button role="tab" class="w-[53px] border-r border-b border-[#999] bg-[#d4d4d4]">Layout</button>
      <button role="tab" class="w-[52px] border-r border-b border-[#999] bg-[#d4d4d4]">Sketch</button>
      <button role="tab" class="w-[54px] border-r border-b border-[#999] bg-[#d4d4d4]">Markup</button>
      <button role="tab" class="w-[56px] border-r border-b border-[#999] bg-[#d4d4d4]">Evaluate</button>
      <button role="tab" class="w-[125px] border-r border-b border-[#999] bg-[#d4d4d4] text-[11px]">SOLIDWORKS Add-Ins</button>
      <button role="tab" aria-selected="true" class="w-[70px] bg-[#f7f7f7] text-[11px] font-bold">Simulation</button>
      <button role="tab" class="w-[53px] border-x border-b border-[#999] bg-[#d4d4d4] text-[11px]">MBD</button>
    </div>
    <div class="flex h-[30px] flex-1 items-center pl-[60px] text-[#777]" role="toolbar" aria-label="View">
      <button class="size-[18px]" aria-label="Zoom to fit"><svg class="size-[18px]"><use href="#zoomfit"/></svg></button>
      <button class="ml-[6px] size-[18px]" aria-label="Zoom to area"><svg class="size-[18px]"><use href="#zoomarea"/></svg></button>
      <button class="ml-[6px] size-[18px]" aria-label="Previous view"><svg class="size-[18px]"><use href="#prevview"/></svg></button>
      <button class="ml-[7px] size-[18px]" aria-label="Section view"><svg class="size-[18px]"><use href="#section"/></svg></button>
      <button class="ml-[7px] size-[18px]" aria-label="Annotation views"><svg class="size-[18px]"><use href="#dynamic"/></svg></button>
      <button class="ml-[6px] flex w-[38px] items-center gap-[6px]" aria-label="View orientation"><svg class="size-[18px]"><use href="#orient"/></svg><svg class="h-1 w-[5px]"><use href="#dd"/></svg></button>
      <button class="flex w-[37px] items-center gap-[6px]" aria-label="Display style"><svg class="size-[18px]"><use href="#cube"/></svg><svg class="h-1 w-[5px]"><use href="#dd"/></svg></button>
      <button class="flex w-[37px] items-center gap-[6px]" aria-label="Hide and show items"><svg class="size-[18px]"><use href="#eye"/></svg><svg class="h-1 w-[5px]"><use href="#dd"/></svg></button>
      <button class="size-[20px]" aria-label="Edit appearance"><svg class="size-[20px]"><use href="#appear"/></svg></button>
      <button class="ml-[5px] flex w-[38px] items-center gap-[5px]" aria-label="Apply scene"><svg class="size-[20px]"><use href="#scene"/></svg><svg class="h-1 w-[5px]"><use href="#dd"/></svg></button>
      <button class="flex w-[37px] items-center gap-[6px]" aria-label="View settings"><svg class="size-[18px]"><use href="#monitor"/></svg><svg class="h-1 w-[5px]"><use href="#dd"/></svg></button>
      <div class="mr-[6px] ml-auto flex gap-[5px] text-[#888]">
        <button aria-label="Dock left"><svg class="size-5" viewBox="0 0 20 20" fill="none" stroke="currentColor"><path d="M5 4h10v12H5zM8 4v12"/><path d="m12 8-3 2.500 3 2.500z" fill="currentColor"/></svg></button>
        <button aria-label="Dock right"><svg class="size-5" viewBox="0 0 20 20" fill="none" stroke="currentColor"><path d="M5 4h10v12H5zM12 4v12"/><path d="m8 8 3 2.500L8 13z" fill="currentColor"/></svg></button>
        <button aria-label="Minimize document"><svg class="size-5"><use href="#min"/></svg></button>
        <button aria-label="Restore document"><svg class="size-5"><use href="#restore"/></svg></button>
        <button aria-label="Close document"><svg class="size-5"><use href="#close"/></svg></button>
      </div>
    </div>
  </div>

  <div class="flex min-h-0 flex-1">
    <!-- Manager panel -->
    <aside class="flex w-[219px] shrink-0 flex-col border-r border-[#888] bg-[#f7f7f7]">
      <div class="mt-[5px] flex h-[16px] shrink-0 items-center justify-center border-y border-[#ccc]"><span class="size-[6px] rounded-full border border-[#999] bg-[#ddd]"></span></div>
      <div class="mt-[4px] flex h-[25px] shrink-0 items-stretch">
        <button class="flex w-[37px] items-center justify-center" aria-label="Feature tree"><svg class="size-[18px]"><use href="#asm"/></svg></button>
        <button class="flex w-[38px] items-center justify-center border border-[#999] bg-[#d4d4d4]" aria-label="Properties"><svg class="size-[18px]"><use href="#panel"/></svg></button>
        <button class="flex w-[37px] items-center justify-center border-y border-r border-[#999] bg-[#d4d4d4]" aria-label="Configurations"><svg class="size-[18px]"><use href="#tree"/></svg></button>
        <button class="flex w-[38px] items-center justify-center border-y border-r border-[#999] bg-[#d4d4d4]" aria-label="Dimensions"><svg class="size-[18px]"><use href="#target"/></svg></button>
        <button class="flex w-[38px] items-center justify-center border-y border-r border-[#999] bg-[#d4d4d4]" aria-label="Appearances"><svg class="size-[20px]"><use href="#ballred"/></svg></button>
        <button class="flex flex-1 items-center justify-center pl-3" aria-label="More tabs"><svg class="h-[10px] w-[6px]" viewBox="0 0 6 10"><path d="m1 1 4 4-4 4" fill="none" stroke="#222" stroke-width="1.800"/></svg></button>
      </div>
      <button class="mx-[3px] flex h-[25px] w-[213px] shrink-0 items-center border border-[#bbb] pl-px" aria-label="Filter components"><svg class="size-[18px]"><use href="#funnel"/></svg><svg class="mt-2 h-1 w-[5px]"><use href="#dd"/></svg></button>
      <div class="flex h-[51px] shrink-0 overflow-hidden">
        <ul class="min-w-0 flex-1 overflow-hidden whitespace-nowrap">
          <li class="flex h-[22px] items-center pl-[7px]"><svg class="mr-[13px] h-[7px] w-1 shrink-0" viewBox="0 0 4 7"><path d="M0 0v7l4-3.500z" fill="#555"/></svg><svg class="mr-1 size-[17px] shrink-0"><use href="#yellow"/></svg>(f) Part1&lt;1&gt; -&gt; (Default) &lt;&lt;Default&gt;</li>
          <li class="flex h-[22px] items-center pl-[7px]"><svg class="mr-[13px] h-[7px] w-1 shrink-0" viewBox="0 0 4 7"><path d="M0 0v7l4-3.500z" fill="#555"/></svg><svg class="mr-1 size-[17px] shrink-0"><use href="#yellow"/></svg>(f) Part2&lt;1&gt; -&gt; (Default) &lt;&lt;Default&gt;</li>
          <li class="pl-6"><svg class="h-[14px] w-4" viewBox="0 0 16 14" fill="none" stroke="#2c79a8" stroke-width="1.300"><circle cx="4" cy="6" r="3"/><circle cx="12" cy="8" r="3"/><circle cx="4" cy="6" r=".7"/></svg></li>
        </ul>
        <div class="flex w-[14px] flex-col items-center justify-between bg-[#f1f1f1] py-1"><svg class="mt-px h-[6px] w-2 shrink-0" viewBox="0 0 8 6"><path d="m1 5 3-3.500L7 5" fill="none" stroke="#444" stroke-width="1.700"/></svg><span class="mt-px h-4 w-3 bg-[#c9c9c9]"></span><svg class="mb-px h-[6px] w-2 shrink-0" viewBox="0 0 8 6"><path d="m1 1 3 3.500L7 1" fill="none" stroke="#444" stroke-width="1.700"/></svg></div>
      </div>
      <div class="flex h-[15px] shrink-0 items-center bg-[#f1f1f1] pr-[18px] pl-1"><svg class="h-2 w-[5px]" viewBox="0 0 5 8"><path d="M4 1 1 4l3 3" fill="none" stroke="#444" stroke-width="1.600"/></svg><span class="ml-[6px] h-[14px] w-[108px] bg-[#c9c9c9]"></span><svg class="ml-auto h-2 w-[5px]" viewBox="0 0 5 8"><path d="m1 1 3 3-3 3" fill="none" stroke="#444" stroke-width="1.600"/></svg></div>
      <div class="mt-[4px] flex h-[16px] shrink-0 items-center justify-center border-y border-[#bbb]"><span class="size-[6px] rounded-full border border-[#999] bg-[#ddd]"></span></div>
      <button class="mx-[2px] flex h-[26px] w-[213px] shrink-0 items-center border border-[#bbb] pl-px" aria-label="Filter study"><svg class="size-[18px]"><use href="#funnel"/></svg><svg class="mt-2 h-1 w-[5px]"><use href="#dd"/></svg></button>
      <div class="flex min-h-0 flex-1">
        <div class="min-w-0 flex-1 overflow-hidden">
          <ul class="flex h-[368px] flex-col whitespace-nowrap *:flex *:flex-1 *:items-center">
            <li><svg class="mr-1 size-[18px] shrink-0"><use href="#study"/></svg>Steel Connection analysis (-Default-)</li>
            <li class="pl-[6px]"><svg class="mr-[10px] h-[7px] w-[6px] shrink-0" viewBox="0 0 6 7"><path d="M1 0v7l4-3.500z" fill="#555"/></svg><svg class="mr-1 size-[18px] shrink-0"><use href="#partcheck"/></svg>Parts</li>
            <li class="pl-[5px]"><svg class="mr-[11px] h-1 w-[6px] shrink-0 text-[#555]"><use href="#dd"/></svg><svg class="mr-1 size-[18px] shrink-0"><use href="#bolt"/></svg>Connections</li>
            <li class="pl-[27px]"><svg class="mr-[11px] h-[7px] w-[6px] shrink-0" viewBox="0 0 6 7"><path d="M1 0v7l4-3.500z" fill="#555"/></svg><svg class="mr-1 size-[18px] shrink-0"><use href="#bolt"/></svg>Connectors</li>
            <li class="pl-[27px]"><svg class="mr-[11px] h-[7px] w-[6px] shrink-0" viewBox="0 0 6 7"><path d="M1 0v7l4-3.500z" fill="#555"/></svg><svg class="mr-1 size-[18px] shrink-0"><use href="#interact"/></svg>Component Interactions</li>
            <li class="pl-[5px]"><svg class="mr-[11px] h-1 w-[6px] shrink-0 text-[#555]"><use href="#dd"/></svg><svg class="mr-1 size-[18px] shrink-0"><use href="#fixtures"/></svg>Fixtures</li>
            <li class="pl-[44px]"><svg class="mr-1 size-[18px] shrink-0"><use href="#anchor"/></svg>Fixed-1</li>
            <li class="pl-[5px]"><svg class="mr-[11px] h-1 w-[6px] shrink-0 text-[#555]"><use href="#dd"/></svg><svg class="mr-1 size-[18px] shrink-0"><use href="#loads"/></svg>External Loads</li>
            <li class="pl-[44px]"><svg class="mr-1 size-[18px] shrink-0"><use href="#force"/></svg>Force-1 (:Per item: 2,000 N:)</li>
            <li class="pl-[5px]"><svg class="mr-[11px] h-1 w-[6px] shrink-0 text-[#555]"><use href="#dd"/></svg><svg class="mr-1 size-[18px] shrink-0"><use href="#mesh"/></svg>Mesh</li>
            <li class="pl-[27px]"><svg class="mr-[11px] h-1 w-[6px] shrink-0 text-[#555]"><use href="#dd"/></svg><svg class="mr-1 size-[18px] shrink-0"><use href="#folder"/></svg>Mesh Quality Plot</li>
            <li class="pl-[65px]"><svg class="mr-1 size-[18px] shrink-0"><use href="#part"/></svg>Quality1 (-Mesh-)</li>
            <li class="pl-[22px]"><svg class="mr-1 size-[18px] shrink-0"><use href="#options"/></svg>Result Options</li>
            <li class="pl-[5px] font-bold"><svg class="mr-[11px] h-1 w-[6px] shrink-0 text-[#555]"><use href="#dd"/></svg><svg class="mr-1 size-[18px] shrink-0"><use href="#folder"/></svg>Results</li>
            <li class="pl-[44px]"><svg class="size-[16px] shrink-0"><use href="#part"/></svg><sup class="w-[6px] text-[9px] italic">σ</sup>Stress1 (-vonMises-)</li>
            <li class="ml-[41px] border border-[#4d88b5] bg-[#a9cbe8] pl-[2px] font-bold"><svg class="size-[16px] shrink-0"><use href="#part"/></svg><sup class="w-[6px] text-[9px] font-normal italic">u</sup>Displacement1 (-Res disp-)</li>
            <li class="pl-[44px]"><svg class="size-[16px] shrink-0"><use href="#part"/></svg><sup class="w-[6px] text-[9px]">ε</sup>Strain1 (-Equivalent-)</li>
          </ul>
        </div>
        <div class="flex w-[14px] flex-col items-center bg-[#f1f1f1] py-1"><svg class="mt-1 mb-1 h-[6px] w-2 shrink-0" viewBox="0 0 8 6"><path d="m1 5 3-3.500L7 5" fill="none" stroke="#444" stroke-width="1.700"/></svg><span class="mb-[42px] w-[13px] flex-1 bg-[#c9c9c9]"></span><svg class="mb-[3px] h-[6px] w-2 shrink-0" viewBox="0 0 8 6"><path d="m1 1 3 3.500L7 1" fill="none" stroke="#444" stroke-width="1.700"/></svg></div>
      </div>
    </aside>

    <!-- Graphics area -->
    <main class="relative min-w-0 flex-1">
      <svg class="h-full w-full" viewBox="219 139 1061 544" role="img" aria-label="Displacement plot of a bolted steel joint">
        <defs>
          <linearGradient id="gV" x1="0" y1="0" x2="0" y2="1"><stop offset="0" stop-color="#0000a8" stop-opacity="0"/><stop offset=".25" stop-color="#0000a8" stop-opacity=".3"/><stop offset=".6" stop-color="#0000a8"/></linearGradient>
          <linearGradient id="gR" x1="0" y1="0" x2="0" y2="1"><stop offset="0" stop-color="#0040d8"/><stop offset=".25" stop-color="#0030d0"/><stop offset=".55" stop-color="#0010dc"/><stop offset="1" stop-color="#0000cc"/></linearGradient>
          <radialGradient id="gH" gradientUnits="userSpaceOnUse" cx="826" cy="290" r="50" gradientTransform="translate(826 290) scale(.7 1) translate(-826 -290)"><stop offset="0" stop-color="#0078d8"/><stop offset="1" stop-color="#0078d8" stop-opacity="0"/></radialGradient>
          <radialGradient id="gH2" gradientUnits="userSpaceOnUse" cx="814" cy="425" r="58" gradientTransform="translate(814 425) scale(.5 1) translate(-814 -425)"><stop offset="0" stop-color="#0050d0" stop-opacity=".9"/><stop offset="1" stop-color="#0050d0" stop-opacity="0"/></radialGradient>
          <linearGradient id="gSide" gradientUnits="userSpaceOnUse" x1="805" y1="0" x2="1050" y2="0"><stop offset="0" stop-color="#002cb0"/><stop offset=".18" stop-color="#0068b8"/><stop offset=".31" stop-color="#00a0a0"/><stop offset=".49" stop-color="#00a010"/><stop offset=".62" stop-color="#409c00"/><stop offset=".77" stop-color="#a09c00"/><stop offset=".88" stop-color="#a85800"/><stop offset="1" stop-color="#a01800"/></linearGradient>
          <linearGradient id="gTop" gradientUnits="userSpaceOnUse" x1="830" y1="330" x2="1062" y2="446"><stop offset="0" stop-color="#1c78ff"/><stop offset=".14" stop-color="#00a8ff"/><stop offset=".28" stop-color="#00fff0"/><stop offset=".4" stop-color="#00ff80"/><stop offset=".51" stop-color="#08ff00"/><stop offset=".66" stop-color="#90ff00"/><stop offset=".79" stop-color="#ffff00"/><stop offset=".9" stop-color="#ff7000"/><stop offset="1" stop-color="#ff2800"/></linearGradient>
          <linearGradient id="gIn" x1="0" y1="0" x2="1" y2="0"><stop offset="0" stop-color="#a86000"/><stop offset="1" stop-color="#a81800"/></linearGradient>
          <linearGradient id="gNut" x1="0" y1="0" x2="0" y2="1"><stop offset="0" stop-color="#14e214"/><stop offset=".5" stop-color="#2ec02e"/><stop offset="1" stop-color="#158615"/></linearGradient>
          <g id="pair"><path d="M-.5-30V-8" stroke="#94108e" stroke-width="2"/><path d="M-4.500-10h8L0 0z" fill="#a8129f"/></g>
          <g id="hex" transform="scale(.3334)" stroke="#0a8a0a" stroke-width="1.500" stroke-linejoin="round">
            <path d="m0 50 32-46 40 3 32 31v60L68 133l-33-7L0 105z" fill="#14dc14"/>
            <path d="M0 48h45v62H0z" fill="url(#gNut)" stroke="none"/><path d="m0 105 35 22 33 6-23-24z" fill="#116d11"/><path d="m45 48 27-41 32 31v60l-36 35-23-24z" fill="#14c014"/>
            <path d="M60 42c-6 20-6 50 0 66h50V36z" fill="#0fa80f" stroke="none"/><path d="M62 36h48v40H60z" fill="#14cc14" stroke="none"/>
            <path d="m95 55 20-41 50 2 36 28v59l-34 41-37-3-35-26z" fill="#14e014"/>
            <path d="M95 55h45v60H95z" fill="url(#gNut)" stroke="none"/><path d="m95 115 35 26 37 3-27-29z" fill="#158615"/><path d="m140 55 25-39 36 28v59l-34 41-27-29z" fill="#0fdc0f"/><path d="m140 58 20-10v52l-20 14z" fill="#20c420" stroke="none"/>
          </g>
          <g id="pin" fill="#16d91c" stroke="#078f0b" stroke-width=".8"><path d="m0 0 4 5H2v5h2v3h-8v-3h2V5h-2z"/></g>
        </defs>

        <!-- Translucent close-up of the joint -->
        <path d="M247 313h254l5 327H247z" fill="#f2f2f2"/>
        <path d="M247 313h243l6 327H247z" fill="#e6e6e6"/>
        <path d="M319 313h51l8 327h-54z" fill="#e3e3e3"/>
        <path d="m500 426 144 12v123l-144-13z" fill="#f0f0f0"/>
        <path d="m500 443 144 14v77l-144-12z" fill="#e3e3e3"/>
        <path d="M386 402 502 376l4 184-117 27z" fill="#dddddd"/>
        <path d="m394 412 96-25v170l-90 20z" fill="#dfdfdf"/>
        <path d="m427 444 54-12h24l-1 92-77 9z" fill="#d3d3d3"/>
        <path d="m481 434 11 2v86l-11 4z" fill="#c9c9c9"/>
        <ellipse cx="400" cy="424" rx="6" ry="11" fill="#e9e9e9"/><path d="M404 413q14-1 16 9l-11 12z" fill="#d9d9d9"/>
        <use href="#hex" transform="translate(446 381)"/>
        <use href="#hex" transform="translate(448 514.500)"/>
        <use href="#hex" transform="translate(373 533.500)"/>

        <!-- Column -->
        <path d="m701 275 59-14 87 8-59 15z" fill="#001484"/>
        <path d="m701 275 59-14v20z" fill="#0010d8"/>
        <path d="m701 275 87 9 2 359-86-8z" fill="url(#gL)"/>
        <path d="m701 275 87 9 2 359-86-8z" fill="url(#gV)"/>
        <path d="m788 284 59-15 2 358-59 16z" fill="url(#gR)"/>
        <path d="m788 284 59-15v88h-59z" fill="url(#gH)"/>
        <path d="M788 360h60v130h-58z" fill="url(#gH2)"/>
        <path d="m701 275 59-14 87 8-59 15zM788 284l2 359M701 275l3 360 86 8 59-16-2-358" fill="none" stroke="#000050" stroke-width="1"/>
        <!-- End plate -->
        <path d="m799 322 49-12 7 2-3 85-19 6-28 7-13 2z" fill="#0048b4" stroke="#001060"/>
        <path d="m804 325 49-13-8 90-41 6-8 2z" fill="#0550b8" stroke="#001060" stroke-width=".8"/>
        <path d="m814 340-10 66" stroke="#001060" stroke-width=".8"/>
        <!-- Beam -->
        <path d="m822 341 227 102-10 50-226-100z" fill="url(#gSide)"/>
        <path d="m822 341 26-4 11 1 217 99-27 6z" fill="url(#gTop)"/>
        <path d="m859 338 217 99-27 6-227-102M1039 493 813 393" fill="none" stroke="#10204a" stroke-width="1"/>
        <path d="m1049 443 27-6-10 48-27 8z" fill="#b83010" stroke="#6c1870" stroke-width="1.500"/>
        <path d="m1051 447 21-5-8 41-21 5z" fill="url(#gIn)" stroke="#6c1870" stroke-width="1.200"/>
        <path d="m1046 475 18 8-21 5z" fill="#ff4a10"/>
        <g fill="#001488" stroke="#000a58"><path d="m808 325 8-2 7 6 1 9-6 8-8 1-6-6v-9z"/><path d="m846 318 6-3 6 5 1 9-5 6-7 1-5-5z"/><path d="m803 390 6-2 6 6v8l-6 8-6-1-5-5 1-9z"/></g>
        <g><use href="#pair" x="824" y="334"/><use href="#pair" x="828" y="335"/><use href="#pair" x="831" y="339"/><use href="#pair" x="851" y="332"/><use href="#pair" x="858" y="332"/><use href="#pair" x="867" y="338"/><use href="#pair" x="872" y="338"/><use href="#pair" x="912" y="343"/><use href="#pair" x="917" y="342"/><use href="#pair" x="957" y="347"/><use href="#pair" x="961" y="345"/><use href="#pair" x="1001" y="352"/><use href="#pair" x="1005" y="350"/><use href="#pair" x="1015" y="357"/><use href="#pair" x="1022" y="357"/><use href="#pair" x="1042" y="348"/><use href="#pair" x="1045" y="353"/><use href="#pair" x="1050" y="354"/></g>
        <g><use href="#pin" x="708" y="638"/><use href="#pin" x="748" y="641"/><use href="#pin" x="788" y="644"/><use href="#pin" x="792" y="645"/><use href="#pin" x="818" y="638"/><use href="#pin" x="845" y="631"/></g>
        <g fill="#16c91c" stroke="#078f0b" stroke-width=".8"><path d="M694 631h8l4 2-1 4h-9l-3-2zM774 640h9l3 2-1 3h-9zM795 640l6-3 3 3-6 4-4-1zM822 633l6-3 2 3-4 4-5-1zM849 626l6-2 2 4-5 3-4-2zM732 640l3-5 3 5zM740 636h4v3h-4z"/></g>

        <path d="M527 394 658 360v17h132v34H658v17z" fill="none" stroke="#d8202c" stroke-width="3" stroke-linejoin="round"/>
      </svg>

      <h1 class="absolute top-[17px] left-[6px] flex flex-col items-start gap-[23px] font-['Roboto',sans-serif] text-[88px] leading-[88px] font-medium whitespace-nowrap text-black">
        <span class="block h-[83px] border-b-4 border-black">Steel Bolt Connection</span>
        <span class="block h-[80px] border-b border-black">Simulations</span>
      </h1>

      <!-- Colour legend -->
      <section class="absolute top-[122px] right-[64px] w-[87px]" aria-label="URES (mm)">
        <h2>URES (mm)</h2>
        <div class="mt-[16px] flex items-start">
          <div class="mt-[11px] h-[296px] w-[23px] border-y border-black bg-[linear-gradient(to_bottom,#ff0000,#ffff00_25%,#00ff00_50%,#00ffff_75%,#0000ff)]"></div>
          <div class="mt-[11px] flex h-[296px] w-[3px] flex-col justify-between *:h-px *:bg-black"><i></i><i></i><i></i><i></i><i></i><i></i><i></i><i></i><i></i><i></i><i></i></div>
          <ol class="ml-2 flex h-[307px] flex-col justify-between whitespace-nowrap">
            <li>7.873e-01</li><li>7.086e-01</li><li>6.299e-01</li><li>5.511e-01</li><li>4.724e-01</li><li>3.937e-01</li><li>3.149e-01</li><li>2.362e-01</li><li>1.575e-01</li><li>7.873e-02</li><li>1.000e-30</li>
          </ol>
        </div>
      </section>

      <!-- Panel splitter handle -->
      <button class="absolute top-[241px] left-0 flex h-[39px] w-2 items-center justify-center border border-l-0 border-[#888] bg-[#f7f7f7]" aria-label="Collapse panel"><span class="size-[5px] rounded-full border border-[#999]"></span></button>

      <!-- Task pane -->
      <nav class="absolute top-[29px] right-0 flex h-[165px] w-[22px] flex-col border border-r-0 border-[#999] bg-[#d4d4d4] *:flex *:flex-1 *:items-center *:justify-center *:border-b *:border-[#aaa] *:last:border-b-0" aria-label="Task pane">
        <button class="bg-white" aria-label="3DEXPERIENCE"><svg class="size-5"><use href="#globe"/></svg></button>
        <button aria-label="Resources"><svg class="size-5"><use href="#home"/></svg></button>
        <button aria-label="Design library"><svg class="size-5"><use href="#books"/></svg></button>
        <button aria-label="File explorer"><svg class="size-5"><use href="#folder2"/></svg></button>
        <button aria-label="View palette"><svg class="size-5"><use href="#palette"/></svg></button>
        <button aria-label="Appearances and scenes"><svg class="size-5"><use href="#ball"/></svg></button>
        <button aria-label="Custom properties"><svg class="size-[18px]"><use href="#panel"/></svg></button>
      </nav>
    </main>
  </div>

  <!-- Model and study tabs -->
  <div class="flex h-[17px] shrink-0 border-y border-[#999] bg-[#f7f7f7]" role="tablist">
    <div class="flex w-[63px] bg-[#c4c4c4] text-[#999] *:flex *:flex-1 *:items-center *:justify-center *:border-r *:border-[#999]">
      <button aria-label="First"><svg class="size-[9px]" viewBox="0 0 9 9" fill="currentColor"><path d="M1 0h1.500v9H1zM8 0v9L3.500 4.500z"/></svg></button>
      <button aria-label="Previous"><svg class="size-[9px]" viewBox="0 0 9 9" fill="currentColor"><path d="M7 0v9L2 4.500z"/></svg></button>
      <button aria-label="Next"><svg class="size-[9px]" viewBox="0 0 9 9" fill="currentColor"><path d="M2 0v9l5-4.500z"/></svg></button>
      <button aria-label="Last"><svg class="size-[9px]" viewBox="0 0 9 9" fill="currentColor"><path d="M1 0v9l4.500-4.500zM6.500 0H8v9H6.500z"/></svg></button>
    </div>
    <button role="tab" class="w-[53px] border-r border-[#999] bg-[#d4d4d4] pl-[5px]">Model</button>
    <button role="tab" class="w-[64px] border-r border-[#999] bg-[#d4d4d4]">3D Views</button>
    <button role="tab" class="w-[95px] border-r border-[#999] bg-[#d4d4d4]">Motion Study 1</button>
    <button role="tab" aria-selected="true" class="flex w-[167px] items-center border-r border-[#777] pl-[6px] font-bold"><svg class="mr-[5px] h-[10px] w-[10px]" viewBox="0 0 10 10"><path d="m1 1 2 8M6 1 3 9 1 5M3 9l3-3M8 3v5M6 5.500h4" stroke="#222" stroke-width="1.300" fill="none"/></svg>Steel Connection analysis</button>
  </div>

  <!-- Status bar -->
  <footer class="flex h-[17px] shrink-0 items-center bg-[#f7f7f7] pr-px pl-px">
    <span class="flex-1">SOLIDWORKS Premium 2023 SP0.1</span>
    <span>Fully Defined</span>
    <span class="ml-[17px]">Editing Assembly</span>
    <svg class="ml-[26px] size-[15px]" viewBox="0 0 15 15"><path d="M1 9 5 1l4 8z" fill="#f0a72c" stroke="#5c3c08"/><path d="M7 9c4 0 5-2 5-5M9.500 5 12 2l2.500 3" fill="none" stroke="#111" stroke-width="1.800"/><path d="M2 11v3M5 11v3M8 11v3M11 10v4" stroke="#1d4e78" stroke-width="2"/></svg>
    <span class="ml-[69px]">MMGS</span>
    <svg class="ml-[18px] h-1 w-[6px] rotate-180"><use href="#dd"/></svg>
    <svg class="ml-[24px] size-[15px]" viewBox="0 0 15 15"><path d="m1 3 6-2 7 6v4l-4 3-9-6z" fill="#eee" stroke="#333"/><circle cx="6" cy="5" r="2" fill="none" stroke="#333"/><path d="m8 10 5-3" stroke="#333"/></svg>
  </footer>
</div>
</body>
</html>
